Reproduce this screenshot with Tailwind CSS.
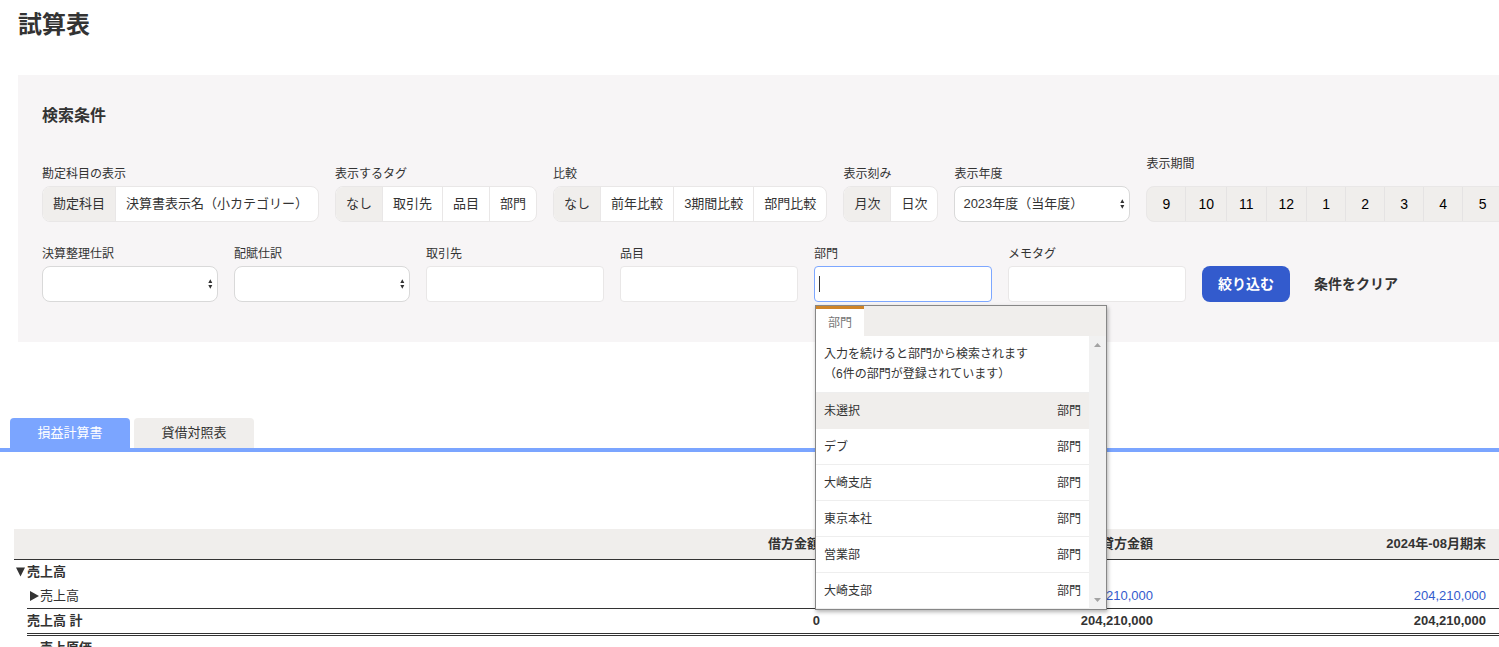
<!DOCTYPE html>
<html lang="ja">
<head>
    <meta charset="UTF-8">
    <meta name="viewport" content="width=device-width, initial-scale=1.0">
    <title>試算表</title>
    <script src="https://cdn.jsdelivr.net/npm/@tailwindcss/browser@4"></script>
</head>
<body class="bg-white text-[#333] text-[13px] font-['Liberation_Sans','Noto_Sans_CJK_JP',sans-serif]">
<div class="h-screen overflow-hidden">

    <h1 class="pl-[18px] pt-[9px] text-2xl font-bold">試算表</h1>

    <!-- Search conditions -->
    <form class="ml-[18px] mt-[34px] bg-[#f7f5f6] pl-6 pt-[29px] pb-10">
        <h2 class="text-base font-bold">検索条件</h2>

        <div class="mt-[26px] flex items-end gap-4 whitespace-nowrap">
            <div class="shrink-0" role="group" aria-labelledby="l-account">
                <div id="l-account" class="mb-0.5 text-xs leading-5">勘定科目の表示</div>
                <div class="flex h-9 overflow-hidden rounded-lg border border-[#e9e7e7] divide-x divide-[#e9e7e7] bg-white">
                    <button type="button" class="bg-[#f0eeec] px-[10px]">勘定科目</button>
                    <button type="button" class="px-[10px]">決算書表示名（小カテゴリー）</button>
                </div>
            </div>
            <div class="shrink-0" role="group" aria-labelledby="l-tag">
                <div id="l-tag" class="mb-0.5 text-xs leading-5">表示するタグ</div>
                <div class="flex h-9 overflow-hidden rounded-lg border border-[#e9e7e7] divide-x divide-[#e9e7e7] bg-white">
                    <button type="button" class="bg-[#f0eeec] px-[10px]">なし</button>
                    <button type="button" class="px-[10px]">取引先</button>
                    <button type="button" class="px-[10px]">品目</button>
                    <button type="button" class="px-[10px]">部門</button>
                </div>
            </div>
            <div class="shrink-0" role="group" aria-labelledby="l-compare">
                <div id="l-compare" class="mb-0.5 text-xs leading-5">比較</div>
                <div class="flex h-9 overflow-hidden rounded-lg border border-[#e9e7e7] divide-x divide-[#e9e7e7] bg-white">
                    <button type="button" class="bg-[#f0eeec] px-[10px]">なし</button>
                    <button type="button" class="px-[10px]">前年比較</button>
                    <button type="button" class="px-[10px]">3期間比較</button>
                    <button type="button" class="px-[10px]">部門比較</button>
                </div>
            </div>
            <div class="shrink-0" role="group" aria-labelledby="l-step">
                <div id="l-step" class="mb-0.5 text-xs leading-5">表示刻み</div>
                <div class="flex h-9 overflow-hidden rounded-lg border border-[#e9e7e7] divide-x divide-[#e9e7e7] bg-white">
                    <button type="button" class="bg-[#f0eeec] px-[10px]">月次</button>
                    <button type="button" class="px-[10px]">日次</button>
                </div>
            </div>
            <div class="shrink-0">
                <label for="year" class="mb-0.5 block text-xs leading-5">表示年度</label>
                <div class="relative">
                    <select id="year" class="block h-9 w-44 appearance-none rounded-lg border border-[#d9d9d9] bg-white px-2">
                        <option>2023年度（当年度）</option>
                    </select>
                    <svg class="pointer-events-none absolute right-[5px] top-[13px] h-[10px] w-[5px]" viewBox="0 0 5 10" fill="#333"><path d="M2.3 .2 4.3 4H.3zM2.3 9.8 .3 6h4z"/></svg>
                </div>
            </div>
            <div class="shrink-0" role="group" aria-labelledby="l-term">
                <div id="l-term" class="mb-3 text-xs leading-5">表示期間</div>
                <div class="flex h-9 overflow-hidden rounded-l-lg border border-[#e9e7e7] divide-x divide-[#e5e3e3] bg-[#f0eeec] text-sm text-black">
                    <button type="button" class="min-w-[39px] px-3">9</button>
                    <button type="button" class="min-w-[39px] px-3">10</button>
                    <button type="button" class="min-w-[39px] px-3">11</button>
                    <button type="button" class="min-w-[39px] px-3">12</button>
                    <button type="button" class="min-w-[39px] px-3">1</button>
                    <button type="button" class="min-w-[39px] px-3">2</button>
                    <button type="button" class="min-w-[39px] px-3">3</button>
                    <button type="button" class="min-w-[39px] px-3">4</button>
                    <button type="button" class="min-w-[39px] px-3">5</button>
                </div>
            </div>
        </div>

        <div class="mt-[22px] flex items-end gap-4 whitespace-nowrap">
            <div class="shrink-0">
                <label for="closing" class="mb-0.5 block text-xs leading-5">決算整理仕訳</label>
                <div class="relative">
                    <select id="closing" class="block h-9 w-44 appearance-none rounded-lg border border-[#d9d9d9] bg-white px-2">
                        <option></option>
                    </select>
                    <svg class="pointer-events-none absolute right-[5px] top-[13px] h-[10px] w-[5px]" viewBox="0 0 5 10" fill="#333"><path d="M2.3 .2 4.3 4H.3zM2.3 9.8 .3 6h4z"/></svg>
                </div>
            </div>
            <div class="shrink-0">
                <label for="alloc" class="mb-0.5 block text-xs leading-5">配賦仕訳</label>
                <div class="relative">
                    <select id="alloc" class="block h-9 w-44 appearance-none rounded-lg border border-[#d9d9d9] bg-white px-2">
                        <option></option>
                    </select>
                    <svg class="pointer-events-none absolute right-[5px] top-[13px] h-[10px] w-[5px]" viewBox="0 0 5 10" fill="#333"><path d="M2.3 .2 4.3 4H.3zM2.3 9.8 .3 6h4z"/></svg>
                </div>
            </div>
            <div class="shrink-0">
                <label for="partner" class="mb-0.5 block text-xs leading-5">取引先</label>
                <input id="partner" type="text" class="block h-9 w-[178px] rounded border border-[#e9e7e7] bg-white px-1">
            </div>
            <div class="shrink-0">
                <label for="item" class="mb-0.5 block text-xs leading-5">品目</label>
                <input id="item" type="text" class="block h-9 w-[178px] rounded border border-[#e9e7e7] bg-white px-1">
            </div>
            <div class="relative shrink-0">
                <label for="section" class="mb-0.5 block text-xs leading-5">部門</label>
                <div class="relative">
                    <input id="section" type="text" class="block h-9 w-[178px] rounded border border-[#7da7ff] bg-white px-1 outline-none">
                    <span class="absolute left-[5px] top-[10px] h-4 w-px bg-[#333]"></span>
                </div>

                <!-- Suggest list -->
                <div class="absolute left-px top-full z-10 mt-[3px] w-[292px] border border-[#878787] bg-white text-xs shadow-[1px_2px_4px_rgba(0,0,0,0.3)]">
                    <div class="flex h-[30px] bg-[#f0eeec]">
                        <button type="button" class="border-t-3 border-[#cf8427] bg-white px-3 text-[#777]">部門</button>
                    </div>
                    <div class="flex">
                        <div class="flex-1">
                            <p class="border-b border-[#eee] p-2 leading-5">入力を続けると部門から検索されます<br>（6件の部門が登録されています）</p>
                            <ul>
                                <li class="flex h-9 items-center justify-between border-b border-[#f0eeec] bg-[#f0eeec] px-2"><span>未選択</span><span>部門</span></li>
                                <li class="flex h-9 items-center justify-between border-b border-[#eee] px-2"><span>デブ</span><span>部門</span></li>
                                <li class="flex h-9 items-center justify-between border-b border-[#eee] px-2"><span>大崎支店</span><span>部門</span></li>
                                <li class="flex h-9 items-center justify-between border-b border-[#eee] px-2"><span>東京本社</span><span>部門</span></li>
                                <li class="flex h-9 items-center justify-between border-b border-[#eee] px-2"><span>営業部</span><span>部門</span></li>
                                <li class="flex h-9 items-center justify-between border-b border-[#eee] px-2"><span>大崎支部</span><span>部門</span></li>
                            </ul>
                        </div>
                        <div class="flex w-[17px] flex-col items-center justify-between bg-[#f1f1f1] py-[7px]">
                            <svg class="h-1 w-[7px]" viewBox="0 0 7 4" fill="#a3a3a3"><path d="M3.5 0 7 4H0z"/></svg>
                            <svg class="h-1 w-[7px]" viewBox="0 0 7 4" fill="#a3a3a3"><path d="M3.5 4 0 0h7z"/></svg>
                        </div>
                    </div>
                </div>
            </div>
            <div class="shrink-0">
                <label for="memo" class="mb-0.5 block text-xs leading-5">メモタグ</label>
                <input id="memo" type="text" class="block h-9 w-[178px] rounded border border-[#e9e7e7] bg-white px-1">
            </div>
            <div class="flex shrink-0 gap-2">
                <button type="submit" class="h-9 rounded-lg bg-[#335bcd] px-4 text-sm font-bold text-white">絞り込む</button>
                <button type="reset" class="h-9 px-4 text-sm font-bold">条件をクリア</button>
            </div>
        </div>
    </form>

    <!-- Tabs -->
    <nav class="mt-[76px] flex gap-1 border-b-4 border-[#7ba5ff] pl-[10px]">
        <a href="#" class="flex h-[30px] w-[120px] items-center justify-center rounded-t bg-[#7ba5ff] text-white">損益計算書</a>
        <a href="#" class="flex h-[30px] w-[120px] items-center justify-center rounded-t bg-[#f0eeec]">貸借対照表</a>
    </nav>

    <!-- Trial balance -->
    <div class="mt-[77px] pl-[14px]">
        <table class="w-full table-fixed border-separate border-spacing-0">
            <colgroup>
                <col class="w-[13px]">
                <col class="w-[13px]">
                <col>
                <col class="w-[333px]">
                <col class="w-[333px]">
                <col class="w-[333px]">
            </colgroup>
            <thead>
                <tr class="h-[31px] bg-[#f0eeec] text-right">
                    <th colspan="3" class="border-b border-[#333]"></th>
                    <th class="border-b border-[#333] pr-[13px]">借方金額</th>
                    <th class="border-b border-[#333] pr-[13px]">貸方金額</th>
                    <th class="border-b border-[#333] pr-[13px]">2024年-08月期末</th>
                </tr>
            </thead>
            <tbody class="leading-5">
                <tr class="h-[23px] font-bold">
                    <td><button type="button" aria-label="閉じる" class="block pl-0.5"><svg class="h-[10px] w-[10px]" viewBox="0 0 10 10" fill="#333"><path d="M0 .5h9L4.5 9.5z"/></svg></button></td>
                    <td colspan="2">売上高</td>
                    <td></td>
                    <td></td>
                    <td></td>
                </tr>
                <tr class="h-[26px]">
                    <td></td>
                    <td class="border-b border-[#333]"><button type="button" aria-label="開く" class="block pl-[3px]"><svg class="h-[10px] w-[10px]" viewBox="0 0 10 10" fill="#333"><path d="M0 0v10l9-5z"/></svg></button></td>
                    <td class="border-b border-[#333]">売上高</td>
                    <td class="border-b border-[#333]"></td>
                    <td class="border-b border-[#333] pr-[13px] text-right"><a href="#" class="text-[#335bcd]">204,210,000</a></td>
                    <td class="border-b border-[#333] pr-[13px] text-right"><a href="#" class="text-[#335bcd]">204,210,000</a></td>
                </tr>
                <tr class="h-[27px] font-bold">
                    <td></td>
                    <td colspan="2" class="border-b-3 border-double border-[#333]">売上高 計</td>
                    <td class="border-b-3 border-double border-[#333] pr-[13px] text-right">0</td>
                    <td class="border-b-3 border-double border-[#333] pr-[13px] text-right">204,210,000</td>
                    <td class="border-b-3 border-double border-[#333] pr-[13px] text-right">204,210,000</td>
                </tr>
                <tr class="h-6 font-bold">
                    <td></td>
                    <td></td>
                    <td>売上原価</td>
                    <td></td>
                    <td></td>
                    <td></td>
                </tr>
            </tbody>
        </table>
    </div>

</div>
</body>
</html>
